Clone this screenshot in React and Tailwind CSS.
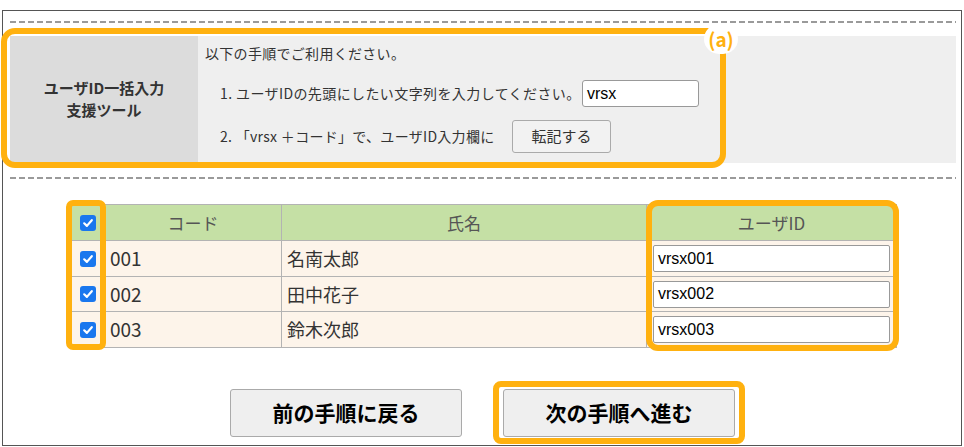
export default function App() {
  const rows = [
    ["001", "名南太郎", "vrsx001"],
    ["002", "田中花子", "vrsx002"],
    ["003", "鈴木次郎", "vrsx003"],
  ];
  const Check = () => (
    <span className="inline-flex w-[16px] h-[16px] rounded-[3px] bg-[#1a77ee] items-center justify-center">
      <svg width="12" height="12" viewBox="0 0 12 12">
        <path d="M2.2 6.3 L4.9 8.9 L9.8 3.2" fill="none" stroke="#fff" strokeWidth="2.2" strokeLinecap="round" strokeLinejoin="round" />
      </svg>
    </span>
  );
  const Dash = ({ className = "" }) => (
    <div className={"h-[2px] w-full bg-[repeating-linear-gradient(90deg,#9a9a9a_0px,#9a9a9a_6px,transparent_6px,transparent_9px)] " + className} />
  );
  return (
    <div className="w-[964px] h-[447px] bg-white overflow-hidden pt-[10px] pl-[2px] font-['Noto_Sans_CJK_JP',sans-serif] text-[#333]">
      <div className="relative w-[960px] h-[436px] border border-[#555] pl-[7px] pr-[5px] pt-[10px]">
        <Dash />
        <div className="mt-[13px] flex h-[127px]">
          <div className="w-[188px] bg-[#dcdcdc] flex items-center justify-center text-center font-bold text-[15px] leading-[22px] text-[#333] pb-[2px]">
            ユーザID一括入力
            <br />
            支援ツール
          </div>
          <div className="flex-1 bg-[#efefef] pl-[7px] text-[14px] text-[#333]">
            <div className="h-[34px] flex items-center tracking-[0.3px]">以下の手順でご利用ください。</div>
            <div className="mt-[10px] h-[27px] flex items-center pl-[15px]">
              <span className="w-[357px] whitespace-nowrap tracking-[0.4px]">1. ユーザIDの先頭にしたい文字列を入力してください。</span>
              <div className="ml-[5px] w-[117px] h-[27px] bg-white border border-[#999] rounded-[3px] flex items-center px-[4px] font-['Liberation_Sans',sans-serif] text-[16px] text-black">
                vrsx
              </div>
            </div>
            <div className="mt-[13px] h-[33px] flex items-center pl-[15px]">
              <span className="w-[277px] whitespace-nowrap tracking-[0.3px]">2. 「vrsx ＋コード」で、ユーザID入力欄に</span>
              <div className="ml-[15px] w-[99px] h-[33px] bg-[#f2f2f2] border border-[#aaa] rounded-[3px] flex items-center justify-center text-[15px] text-[#333]">
                転記する
              </div>
            </div>
          </div>
        </div>
        <Dash className="mt-[14px]" />
        <table className="mt-[25px] ml-[60px] border-collapse table-fixed w-[826px]">
          <colgroup>
            <col className="w-[34px]" />
            <col className="w-[177px]" />
            <col className="w-[365px]" />
            <col className="w-[250px]" />
          </colgroup>
          <thead>
            <tr className="h-[36px] bg-[#c5e0a5] text-[17px] text-[#555]">
              <th className="border border-[#b3b3b3] font-normal">
                <div className="flex justify-center"><Check /></div>
              </th>
              <th className="border border-[#b3b3b3] font-normal">コード</th>
              <th className="border border-[#b3b3b3] font-normal">氏名</th>
              <th className="border border-[#b3b3b3] font-normal">ユーザID</th>
            </tr>
          </thead>
          <tbody>
            {rows.map((r, i) => (
              <tr key={i} className={(i === 1 ? "h-[35px]" : "h-[36px]") + " bg-[#fdf4ea] text-[18px] text-[#333]"}>
                <td className="border border-[#b3b3b3]">
                  <div className="flex justify-center"><Check /></div>
                </td>
                <td className="border border-[#b3b3b3] pl-[5px] text-[19px]">{r[0]}</td>
                <td className="border border-[#b3b3b3] pl-[5px]">{r[1]}</td>
                <td className="border border-[#b3b3b3] px-[6px]">
                  <div className="h-[27px] bg-white border border-[#999] rounded-[2px] flex items-center px-[4px] font-['Liberation_Sans',sans-serif] text-[16px] text-black">
                    {r[2]}
                  </div>
                </td>
              </tr>
            ))}
          </tbody>
        </table>
        <div className="mt-[41px] ml-[220px] flex gap-[41px]">
          <div className="w-[232px] h-[48px] bg-[#efefef] border border-[#aaa] rounded-[3px] flex items-center justify-center font-bold text-[21px] text-black">
            前の手順に戻る
          </div>
          <div className="w-[232px] h-[48px] bg-[#efefef] border border-[#aaa] rounded-[3px] flex items-center justify-center font-bold text-[21px] text-black">
            次の手順へ進む
          </div>
        </div>

        <div className="absolute left-[-2px] top-[17px] w-[725px] h-[140px] border-[6px] border-[#ffb10f] rounded-[14px] pointer-events-none" />
        <div className="absolute left-[701px] top-[13px] w-[34px] h-[30px] rounded-full bg-white flex items-center justify-center text-[#ffb10f] text-[19px] font-semibold leading-none pb-[2px]">
          (a)
        </div>
        <div className="absolute left-[63px] top-[189px] w-[40px] h-[150px] border-[6px] border-[#ffb10f] rounded-[7px] pointer-events-none" />
        <div className="absolute left-[643px] top-[189px] w-[253px] h-[151px] border-[6px] border-[#ffb10f] rounded-[12px] pointer-events-none" />
        <div className="absolute left-[490px] top-[370px] w-[252px] h-[63px] border-[6px] border-[#ffb10f] rounded-[8px] pointer-events-none" />
      </div>
    </div>
  );
}
